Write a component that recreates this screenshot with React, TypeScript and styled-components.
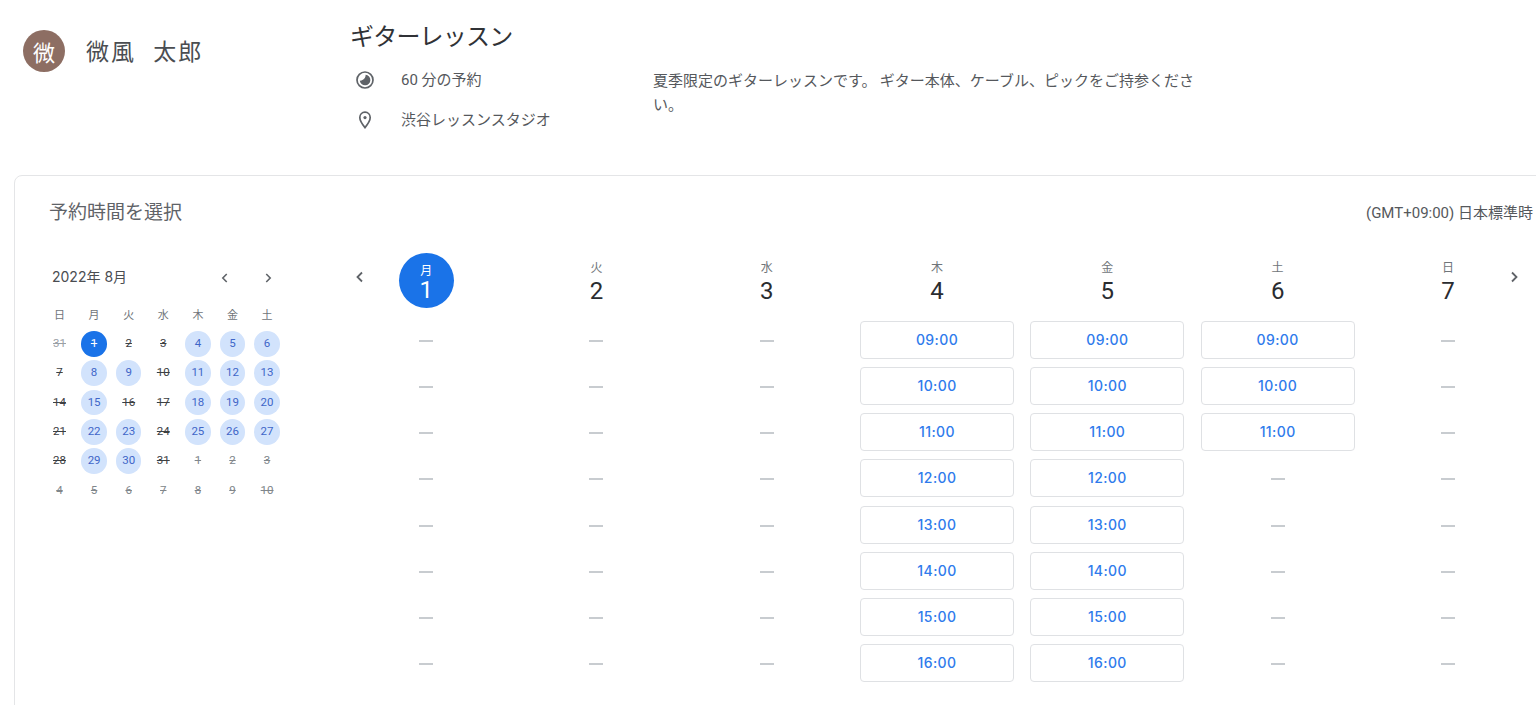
import React from "react";
import styled, { createGlobalStyle } from "styled-components";

const CJK = `"Noto Sans CJK JP", sans-serif`;
const LATIN = `Roboto, "Noto Sans CJK JP", sans-serif`;
const ROUND = `Inter, "Noto Sans CJK JP", sans-serif`;

const Global = createGlobalStyle`
  html, body { margin: 0; padding: 0; background: #fff; overflow: hidden; }
  * { box-sizing: border-box; }
`;

const Page = styled.div`
  width: 1536px;
  height: 705px;
  overflow: hidden;
  color: #3c4043;
  font-family: ${LATIN};
`;

const Top = styled.header`
  display: flex;
  height: 175px;
  padding-left: 23px;
`;

const Owner = styled.div`
  display: flex;
  align-items: flex-start;
  gap: 21px;
  width: 327px;
  padding-top: 30px;
`;

const Avatar = styled.div`
  width: 42px;
  height: 42px;
  border-radius: 50%;
  background: #8d6e63;
  color: #fff;
  display: flex;
  align-items: center;
  justify-content: center;
  font: 400 22px/1 ${CJK};
`;

const OwnerName = styled.div`
  font: 400 23px/40px ${CJK};
  letter-spacing: 2px;
  word-spacing: 10px;
  color: #4a4d51;
  white-space: pre;
`;

const Event = styled.div`
  padding-top: 17px;
`;

const Title = styled.h1`
  margin: 0 0 7px;
  font: 400 24px/36px ${CJK};
  letter-spacing: -0.8px;
  color: #303236;
`;

const EventBody = styled.div`
  display: flex;
`;

const Facts = styled.div`
  width: 303px;
`;

const Fact = styled.div`
  display: flex;
  align-items: center;
  gap: 21px;
  height: 40px;
  font: 400 15px/20px ${LATIN};
  color: #55585c;
`;

const FactIcon = styled.span`
  width: 30px;
  display: flex;
  justify-content: center;
  color: #5f6368;
`;

const Description = styled.p`
  margin: 8px 0 0;
  width: 545px;
  font: 400 15px/23.5px ${CJK};
  color: #55585c;
`;

const Card = styled.section`
  margin-left: 14px;
  width: 1560px;
  height: 560px;
  border: 1px solid #e4e5e7;
  border-radius: 8px;
  padding: 25px 40px 0 35px;
`;

const CardHead = styled.div`
  display: flex;
  justify-content: space-between;
  align-items: center;
  height: 24px;
`;

const CardTitle = styled.h2`
  margin: -4px 0 0 -1px;
  font: 400 19px/24px ${CJK};
  color: #5f6368;
`;

const Zone = styled.div`
  font: 400 15px/24px ${LATIN};
  color: #55585c;
`;

const CardBody = styled.div`
  display: flex;
  margin-top: 28px;
`;

const Mini = styled.div`
  width: 291px;
  flex: none;
  padding: 14px 0 0 2px;
`;

const MiniHead = styled.div`
  display: flex;
  align-items: center;
  width: 228px;
  height: 20px;
  margin-bottom: 13px;
`;

const MiniTitle = styled.div`
  flex: 1;
  font: 400 14px/20px ${ROUND};
  color: #4a4d51;
`;

const MiniNav = styled.div`
  display: flex;
  gap: 19px;
  padding-top: 2px;
`;

const NavIcon = styled.span`
  width: 24px;
  height: 24px;
  display: flex;
  align-items: center;
  justify-content: center;
  color: #5f6368;
`;

const MiniGrid = styled.div`
  display: grid;
  grid-template-columns: repeat(7, 34.6px);
  grid-auto-rows: 29.3px;
  margin-left: -9.8px;
`;

const MiniLabel = styled.div`
  display: flex;
  align-items: center;
  justify-content: center;
  font: 400 11px/1 ${CJK};
  color: #70757a;
`;

type Tone = "past" | "month" | "open" | "today" | "next";

const toneColor: Record<Tone, string> = {
  past: "#9aa0a6",
  month: "#3c4043",
  open: "#3f66c8",
  today: "#ffffff",
  next: "#80868b",
};

const MiniDay = styled.div<{ $tone: Tone }>`
  justify-self: center;
  align-self: center;
  width: 25.5px;
  height: 25.5px;
  border-radius: 50%;
  display: flex;
  align-items: center;
  justify-content: center;
  font: 400 11.5px/1 ${LATIN};
  color: ${(p) => toneColor[p.$tone]};
  background: ${(p) => (p.$tone === "open" ? "#d2e3fc" : p.$tone === "today" ? "#1a73e8" : "transparent")};
  text-decoration: ${(p) => (p.$tone === "open" ? "none" : "line-through")};
`;

const Week = styled.div`
  position: relative;
  display: grid;
  grid-template-columns: repeat(7, 170.3px);
`;

const WeekArrow = styled.span<{ $side: "left" | "right" }>`
  position: absolute;
  top: 12px;
  ${(p) => (p.$side === "left" ? "left: 7px;" : "left: 1161px;")}
  width: 24px;
  height: 24px;
  display: flex;
  align-items: center;
  justify-content: center;
  color: #5f6368;
`;

const Column = styled.div`
  display: flex;
  flex-direction: column;
  align-items: center;
`;

const DayHead = styled.div`
  height: 68px;
  display: flex;
  justify-content: center;
`;

const DayBadge = styled.div<{ $on: boolean }>`
  width: 55px;
  height: 55px;
  border-radius: 50%;
  display: flex;
  flex-direction: column;
  align-items: center;
  padding-top: ${(p) => (p.$on ? 10 : 7)}px;
  background: ${(p) => (p.$on ? "#1a73e8" : "transparent")};
`;

const DayName = styled.div<{ $on: boolean }>`
  font: 400 12px/14px ${CJK};
  color: ${(p) => (p.$on ? "#fff" : "#70757a")};
`;

const DayNum = styled.div<{ $on: boolean }>`
  margin-top: ${(p) => (p.$on ? 0 : 4)}px;
  font: 400 24px/26px ${LATIN};
  color: ${(p) => (p.$on ? "#fff" : "#2a2c30")};
`;

const Slots = styled.div`
  display: flex;
  flex-direction: column;
  gap: 8.15px;
  width: 154px;
`;

const Slot = styled.div`
  height: 38px;
  display: flex;
  align-items: center;
  justify-content: center;
`;

const TimeButton = styled.button`
  width: 100%;
  height: 100%;
  padding: 0;
  background: #fff;
  border: 1px solid #dfe1e4;
  border-radius: 4px;
  color: #2f7bec;
  font: 500 14px/1 ${ROUND};
  letter-spacing: 0.4px;
`;

const Dash = styled.span`
  width: 14px;
  height: 2px;
  margin-top: 2px;
  background: #c8ccd0;
`;

const Chevron = ({ dir, size = 16 }: { dir: "left" | "right"; size?: number }) => (
  <svg width={size} height={size} viewBox="0 0 16 16" fill="none" stroke="currentColor" strokeWidth="1.8">
    <path d={dir === "left" ? "M10 3.5 5.5 8l4.5 4.5" : "M6 3.5 10.5 8 6 12.5"} />
  </svg>
);

const ClockIcon = () => (
  <svg width="20" height="20" viewBox="0 0 20 20">
    <circle cx="10" cy="10" r="8" fill="none" stroke="currentColor" strokeWidth="1.7" />
    <path d="M10.6 4.8a5.3 5.3 0 1 1-5.8 5.8c3 .5 6-2.5 5.8-5.8z" fill="currentColor" />
  </svg>
);

const PinIcon = () => (
  <svg width="20" height="20" viewBox="0 0 20 20" fill="none" stroke="currentColor" strokeWidth="1.7">
    <path d="M10 2.2c-3 0-5.2 2.4-5.2 5.4 0 3.8 5.2 10 5.2 10s5.2-6.2 5.2-10c0-3-2.2-5.4-5.2-5.4z" />
    <circle cx="10" cy="7.6" r="1.6" fill="currentColor" stroke="none" />
  </svg>
);

const weekLabels = ["日", "月", "火", "水", "木", "金", "土"];

const openDays = new Set([4, 5, 6, 8, 9, 11, 12, 13, 15, 18, 19, 20, 22, 23, 25, 26, 27, 29, 30]);

const miniDays: { n: number; tone: Tone }[] = [
  { n: 31, tone: "past" },
  ...Array.from({ length: 31 }, (_, i) => {
    const n = i + 1;
    const tone: Tone = n === 1 ? "today" : openDays.has(n) ? "open" : "month";
    return { n, tone };
  }),
  ...[1, 2, 3, 4, 5, 6, 7, 8, 9, 10].map((n) => ({ n, tone: "next" as Tone })),
];

const times = ["09:00", "10:00", "11:00", "12:00", "13:00", "14:00", "15:00", "16:00"];

const week = [
  { name: "月", num: 1, open: 0, on: true },
  { name: "火", num: 2, open: 0, on: false },
  { name: "水", num: 3, open: 0, on: false },
  { name: "木", num: 4, open: 8, on: false },
  { name: "金", num: 5, open: 8, on: false },
  { name: "土", num: 6, open: 3, on: false },
  { name: "日", num: 7, open: 0, on: false },
];

export default function App() {
  return (
    <Page>
      <Global />
      <Top>
        <Owner>
          <Avatar>微</Avatar>
          <OwnerName>微風 太郎</OwnerName>
        </Owner>
        <Event>
          <Title>ギターレッスン</Title>
          <EventBody>
            <Facts>
              <Fact>
                <FactIcon>
                  <ClockIcon />
                </FactIcon>
                60 分の予約
              </Fact>
              <Fact>
                <FactIcon>
                  <PinIcon />
                </FactIcon>
                渋谷レッスンスタジオ
              </Fact>
            </Facts>
            <Description>夏季限定のギターレッスンです。 ギター本体、ケーブル、ピックをご持参ください。</Description>
          </EventBody>
        </Event>
      </Top>
      <Card>
        <CardHead>
          <CardTitle>予約時間を選択</CardTitle>
          <Zone>(GMT+09:00) 日本標準時</Zone>
        </CardHead>
        <CardBody>
          <Mini>
            <MiniHead>
              <MiniTitle>2022年 8月</MiniTitle>
              <MiniNav>
                <NavIcon>
                  <Chevron dir="left" size={14} />
                </NavIcon>
                <NavIcon>
                  <Chevron dir="right" size={14} />
                </NavIcon>
              </MiniNav>
            </MiniHead>
            <MiniGrid>
              {weekLabels.map((l) => (
                <MiniLabel key={l}>{l}</MiniLabel>
              ))}
              {miniDays.map((d, i) => (
                <MiniDay key={i} $tone={d.tone}>
                  {d.n}
                </MiniDay>
              ))}
            </MiniGrid>
          </Mini>
          <Week>
            <WeekArrow $side="left">
              <Chevron dir="left" />
            </WeekArrow>
            <WeekArrow $side="right">
              <Chevron dir="right" />
            </WeekArrow>
            {week.map((d) => (
              <Column key={d.num}>
                <DayHead>
                  <DayBadge $on={d.on}>
                    <DayName $on={d.on}>{d.name}</DayName>
                    <DayNum $on={d.on}>{d.num}</DayNum>
                  </DayBadge>
                </DayHead>
                <Slots>
                  {times.map((t, i) => (
                    <Slot key={t}>{i < d.open ? <TimeButton>{t}</TimeButton> : <Dash />}</Slot>
                  ))}
                </Slots>
              </Column>
            ))}
          </Week>
        </CardBody>
      </Card>
    </Page>
  );
}
